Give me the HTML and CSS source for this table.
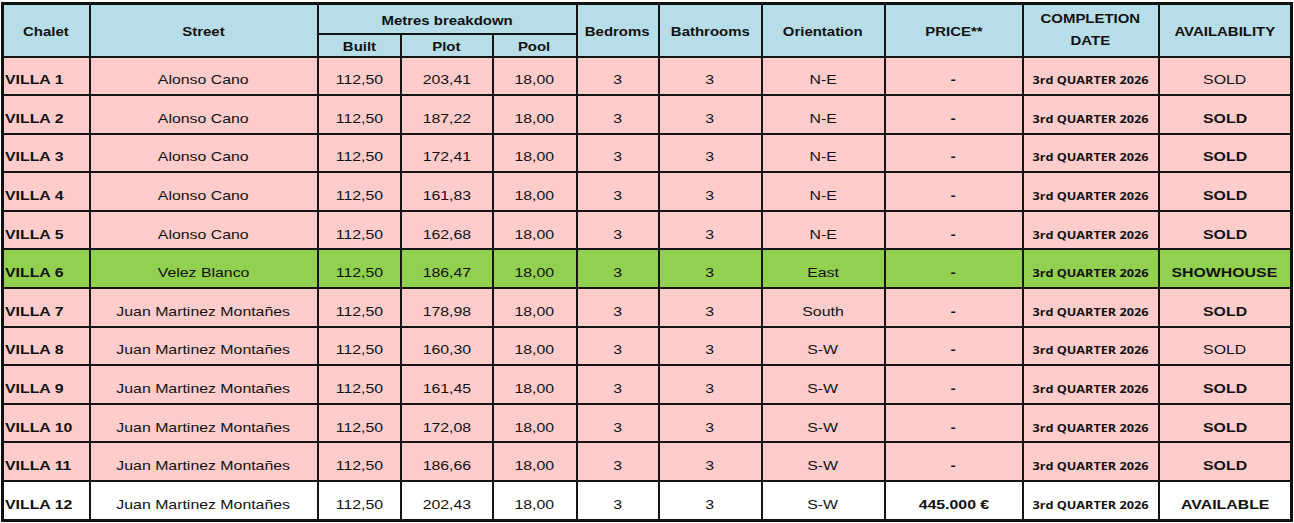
FILE: index.html
```html
<!DOCTYPE html>
<html lang="en">
<head>
<meta charset="utf-8">
<title>Villas</title>
<link rel="stylesheet" href="styles.css">
</head>
<body>
<table class="sheet">
  <colgroup>
    <col class="c-chalet"><col class="c-street"><col class="c-built"><col class="c-plot"><col class="c-pool"><col class="c-bed"><col class="c-bath"><col class="c-orient"><col class="c-price"><col class="c-date"><col class="c-avail">
  </colgroup>
  <thead>
    <tr class="h1">
      <th rowspan="2"><span class="s">Chalet</span></th>
      <th rowspan="2"><span class="s">Street</span></th>
      <th colspan="3"><span class="s">Metres breakdown</span></th>
      <th rowspan="2"><span class="s">Bedroms</span></th>
      <th rowspan="2"><span class="s">Bathrooms</span></th>
      <th rowspan="2"><span class="s">Orientation</span></th>
      <th rowspan="2"><span class="s">PRICE**</span></th>
      <th rowspan="2" class="two"><span class="s">COMPLETION<br>DATE</span></th>
      <th rowspan="2"><span class="s">AVAILABILITY</span></th>
    </tr>
    <tr class="h2">
      <th><span class="s">Built</span></th>
      <th><span class="s">Plot</span></th>
      <th><span class="s">Pool</span></th>
    </tr>
  </thead>
  <tbody>
    <tr class="pink"><td class="name"><span class="s">VILLA 1</span></td><td><span class="s">Alonso Cano</span></td><td><span class="s">112,50</span></td><td><span class="s">203,41</span></td><td><span class="s">18,00</span></td><td><span class="s">3</span></td><td><span class="s">3</span></td><td><span class="s">N-E</span></td><td class="b"><span class="s">-</span></td><td class="date"><span class="s">3rd QUARTER 2026</span></td><td class="avail"><span class="s">SOLD</span></td></tr>
    <tr class="pink"><td class="name"><span class="s">VILLA 2</span></td><td><span class="s">Alonso Cano</span></td><td><span class="s">112,50</span></td><td><span class="s">187,22</span></td><td><span class="s">18,00</span></td><td><span class="s">3</span></td><td><span class="s">3</span></td><td><span class="s">N-E</span></td><td class="b"><span class="s">-</span></td><td class="date"><span class="s">3rd QUARTER 2026</span></td><td class="avail b"><span class="s">SOLD</span></td></tr>
    <tr class="pink"><td class="name"><span class="s">VILLA 3</span></td><td><span class="s">Alonso Cano</span></td><td><span class="s">112,50</span></td><td><span class="s">172,41</span></td><td><span class="s">18,00</span></td><td><span class="s">3</span></td><td><span class="s">3</span></td><td><span class="s">N-E</span></td><td class="b"><span class="s">-</span></td><td class="date"><span class="s">3rd QUARTER 2026</span></td><td class="avail b"><span class="s">SOLD</span></td></tr>
    <tr class="pink"><td class="name"><span class="s">VILLA 4</span></td><td><span class="s">Alonso Cano</span></td><td><span class="s">112,50</span></td><td><span class="s">161,83</span></td><td><span class="s">18,00</span></td><td><span class="s">3</span></td><td><span class="s">3</span></td><td><span class="s">N-E</span></td><td class="b"><span class="s">-</span></td><td class="date"><span class="s">3rd QUARTER 2026</span></td><td class="avail b"><span class="s">SOLD</span></td></tr>
    <tr class="pink"><td class="name"><span class="s">VILLA 5</span></td><td><span class="s">Alonso Cano</span></td><td><span class="s">112,50</span></td><td><span class="s">162,68</span></td><td><span class="s">18,00</span></td><td><span class="s">3</span></td><td><span class="s">3</span></td><td><span class="s">N-E</span></td><td class="b"><span class="s">-</span></td><td class="date"><span class="s">3rd QUARTER 2026</span></td><td class="avail b"><span class="s">SOLD</span></td></tr>
    <tr class="green"><td class="name"><span class="s">VILLA 6</span></td><td><span class="s">Velez Blanco</span></td><td><span class="s">112,50</span></td><td><span class="s">186,47</span></td><td><span class="s">18,00</span></td><td><span class="s">3</span></td><td><span class="s">3</span></td><td><span class="s">East</span></td><td class="b"><span class="s">-</span></td><td class="date"><span class="s">3rd QUARTER 2026</span></td><td class="avail b"><span class="s">SHOWHOUSE</span></td></tr>
    <tr class="pink"><td class="name"><span class="s">VILLA 7</span></td><td><span class="s">Juan Martinez Montañes</span></td><td><span class="s">112,50</span></td><td><span class="s">178,98</span></td><td><span class="s">18,00</span></td><td><span class="s">3</span></td><td><span class="s">3</span></td><td><span class="s">South</span></td><td class="b"><span class="s">-</span></td><td class="date"><span class="s">3rd QUARTER 2026</span></td><td class="avail b"><span class="s">SOLD</span></td></tr>
    <tr class="pink"><td class="name"><span class="s">VILLA 8</span></td><td><span class="s">Juan Martinez Montañes</span></td><td><span class="s">112,50</span></td><td><span class="s">160,30</span></td><td><span class="s">18,00</span></td><td><span class="s">3</span></td><td><span class="s">3</span></td><td><span class="s">S-W</span></td><td class="b"><span class="s">-</span></td><td class="date"><span class="s">3rd QUARTER 2026</span></td><td class="avail"><span class="s">SOLD</span></td></tr>
    <tr class="pink"><td class="name"><span class="s">VILLA 9</span></td><td><span class="s">Juan Martinez Montañes</span></td><td><span class="s">112,50</span></td><td><span class="s">161,45</span></td><td><span class="s">18,00</span></td><td><span class="s">3</span></td><td><span class="s">3</span></td><td><span class="s">S-W</span></td><td class="b"><span class="s">-</span></td><td class="date"><span class="s">3rd QUARTER 2026</span></td><td class="avail b"><span class="s">SOLD</span></td></tr>
    <tr class="pink"><td class="name"><span class="s">VILLA 10</span></td><td><span class="s">Juan Martinez Montañes</span></td><td><span class="s">112,50</span></td><td><span class="s">172,08</span></td><td><span class="s">18,00</span></td><td><span class="s">3</span></td><td><span class="s">3</span></td><td><span class="s">S-W</span></td><td class="b"><span class="s">-</span></td><td class="date"><span class="s">3rd QUARTER 2026</span></td><td class="avail b"><span class="s">SOLD</span></td></tr>
    <tr class="pink"><td class="name"><span class="s">VILLA 11</span></td><td><span class="s">Juan Martinez Montañes</span></td><td><span class="s">112,50</span></td><td><span class="s">186,66</span></td><td><span class="s">18,00</span></td><td><span class="s">3</span></td><td><span class="s">3</span></td><td><span class="s">S-W</span></td><td class="b"><span class="s">-</span></td><td class="date"><span class="s">3rd QUARTER 2026</span></td><td class="avail b"><span class="s">SOLD</span></td></tr>
    <tr class="white"><td class="name"><span class="s">VILLA 12</span></td><td><span class="s">Juan Martinez Montañes</span></td><td><span class="s">112,50</span></td><td><span class="s">202,43</span></td><td><span class="s">18,00</span></td><td><span class="s">3</span></td><td><span class="s">3</span></td><td><span class="s">S-W</span></td><td class="b"><span class="s">445.000 €</span></td><td class="date"><span class="s">3rd QUARTER 2026</span></td><td class="avail b"><span class="s">AVAILABLE</span></td></tr>
  </tbody>
</table>
</body>
</html>
```
FILE: styles.css
```css
html, body {
  margin: 0;
  padding: 0;
  background: #ffffff;
}

body {
  padding: 2px 0 0 1px;
  font-family: "Liberation Sans", Arial, sans-serif;
  color: #111;
}

.sheet {
  border-collapse: collapse;
  table-layout: fixed;
  width: 1289px;
  border: 3px solid #111;
}

.c-chalet { width: 87px; }
.c-street { width: 228px; }
.c-built { width: 83px; }
.c-plot { width: 92px; }
.c-pool { width: 84px; }
.c-bed { width: 82px; }
.c-bath { width: 103px; }
.c-orient { width: 123px; }
.c-price { width: 138px; }
.c-date { width: 136px; }
.c-avail { width: 133px; }

.sheet th,
.sheet td {
  border: 2px solid #151515;
  padding: 0;
  text-align: center;
  vertical-align: middle;
  white-space: nowrap;
  overflow: hidden;
}

.sheet th {
  background: #b7dde8;
  font-size: 13px;
  font-weight: bold;
  padding-top: 3px;
}

.sheet th .s {
  transform: scaleX(1.15);
}

.h1 { height: 30px; }
.h2 { height: 23px; }
.h2 th { padding-top: 2px; }

.sheet th.two {
  line-height: 22px;
  padding-top: 0;
}

.sheet td {
  height: 28.6px;
  font-size: 13px;
  padding-top: 8px;
}

.s {
  display: inline-block;
  transform: scaleX(1.22);
}

.sheet td.name {
  text-align: left;
  font-weight: bold;
  padding-left: 1px;
}

.sheet td.name .s {
  transform-origin: left center;
}

.sheet td.b { font-weight: bold; }

.sheet td.date {
  font-family: "Open Sans", "Noto Sans", sans-serif;
  font-weight: bold;
  font-size: 11px;
}

.sheet td.date .s {
  transform: scaleX(1.15);
}

.pink td { background: #ffcccc; }
.green td { background: #92d050; }
.white td { background: #ffffff; }
```
